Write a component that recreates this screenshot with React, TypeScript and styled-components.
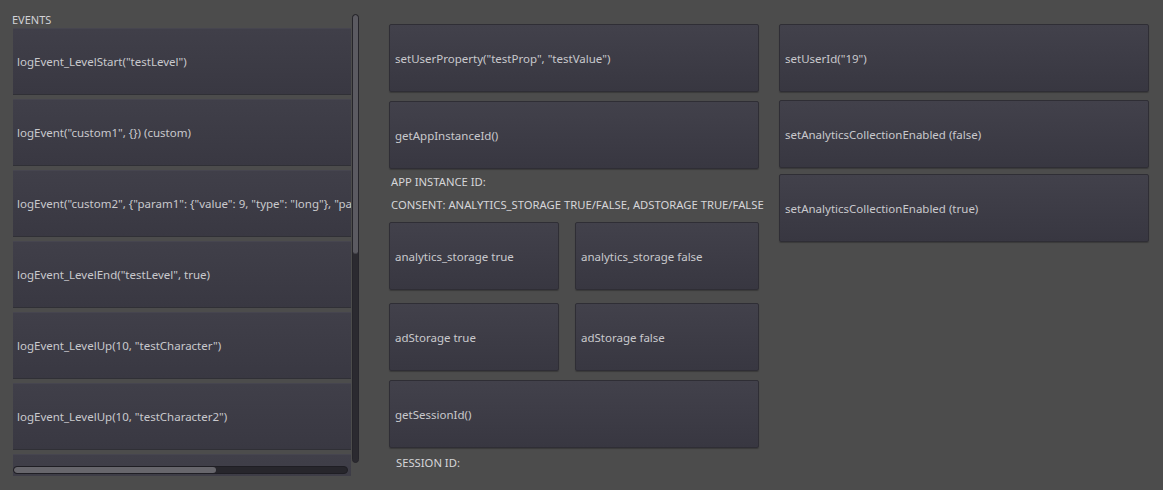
import styled, { createGlobalStyle } from "styled-components";

const GlobalStyle = createGlobalStyle`
  html, body {
    margin: 0;
    padding: 0;
    background: #4c4c4c;
  }
  body {
    font-family: "Noto Sans", "DejaVu Sans", sans-serif;
    font-size: 11.5px;
    color: #c9c9cc;
  }
`;

const events = [
  'logEvent_LevelStart("testLevel")',
  'logEvent("custom1", {}) (custom)',
  'logEvent("custom2", {"param1": {"value": 9, "type": "long"}, "param2": {"value": "abc", "type": "string"}})',
  'logEvent_LevelEnd("testLevel", true)',
  'logEvent_LevelUp(10, "testCharacter")',
  'logEvent_LevelUp(10, "testCharacter2")',
  'logEvent_Share("testMethod", "testContent")',
];

const App = () => {
  return (
    <>
      <GlobalStyle />
      <Screen>
        <EventsPanel>
          <EventsViewport>
            <SectionLabel>EVENTS</SectionLabel>
            <EventList>
              {events.map((e) => (
                <EventButton key={e}>{e}</EventButton>
              ))}
            </EventList>
          </EventsViewport>
          <VScroll>
            <VGrabber />
          </VScroll>
          <HScroll>
            <HGrabber />
          </HScroll>
        </EventsPanel>

        <MiddleColumn>
          <WideButton>setUserProperty("testProp", "testValue")</WideButton>
          <WideButton $top={9}>getAppInstanceId()</WideButton>
          <InfoLabel $top={7}>APP INSTANCE ID:</InfoLabel>
          <InfoLabel $top={11}>CONSENT: ANALYTICS_STORAGE TRUE/FALSE, ADSTORAGE TRUE/FALSE</InfoLabel>
          <ConsentGrid>
            <WideButton>analytics_storage true</WideButton>
            <WideButton>analytics_storage false</WideButton>
            <WideButton>adStorage true</WideButton>
            <WideButton>adStorage false</WideButton>
          </ConsentGrid>
          <WideButton $top={9}>getSessionId()</WideButton>
          <InfoLabel $top={9} $indent={7}>SESSION ID:</InfoLabel>
        </MiddleColumn>

        <RightColumn>
          <WideButton>setUserId("19")</WideButton>
          <WideButton $top={8}>setAnalyticsCollectionEnabled (false)</WideButton>
          <WideButton $top={6}>setAnalyticsCollectionEnabled (true)</WideButton>
        </RightColumn>
      </Screen>
    </>
  );
};

const Screen = styled.div`
  width: 1163px;
  height: 490px;
  display: flex;
  align-items: flex-start;
  box-sizing: border-box;
  padding: 14px 0 0 12px;
  overflow: hidden;
`;

const EventsPanel = styled.div`
  display: grid;
  grid-template-columns: 339px 8px;
  grid-template-rows: 449px 13px;
  position: relative;
  width: 348px;
  height: 462px;
`;

const EventsViewport = styled.div`
  grid-column: 1;
  grid-row: 1 / span 2;
  overflow: hidden;
  display: flex;
  flex-direction: column;
`;

const SectionLabel = styled.div`
  flex: none;
  height: 14px;
  line-height: 11px;
  color: #d2d2d6;
  font-size: 11px;
`;

const EventList = styled.div`
  display: flex;
  flex-direction: column;
  gap: 4px;
  padding-left: 1px;
`;

const EventButton = styled.div`
  flex: none;
  height: 67px;
  box-sizing: border-box;
  display: flex;
  align-items: center;
  padding-left: 4px;
  white-space: nowrap;
  overflow: hidden;
  background: linear-gradient(180deg, #403f49 0%, #393842 100%);
  border-top: 1px solid #46454f;
  border-bottom: 1px solid #303036;
  color: #c9c9cd;
`;

const VScroll = styled.div`
  grid-column: 2;
  grid-row: 1;
  position: relative;
  left: 1px;
  width: 7px;
  height: 449px;
  box-sizing: border-box;
  border-radius: 4px;
  background: #2b2a30;
  border: 1px solid #26252b;
  overflow: hidden;
`;

const VGrabber = styled.div`
  height: 238px;
  border-radius: 3px;
  background: #5b5a61;
  border-bottom: 1px solid #45444b;
`;

const HScroll = styled.div`
  position: absolute;
  left: 1px;
  top: 452px;
  width: 335px;
  height: 8px;
  box-sizing: border-box;
  border-radius: 4px;
  background: #27262c;
  border: 1px solid #1f1e24;
  overflow: hidden;
`;

const HGrabber = styled.div`
  width: 202px;
  height: 100%;
  border-radius: 3px;
  background: #67666c;
`;

const MiddleColumn = styled.div`
  margin-left: 29px;
  margin-top: 10px;
  width: 370px;
  display: flex;
  flex-direction: column;
`;

const RightColumn = styled.div`
  margin-left: 20px;
  margin-top: 10px;
  width: 370px;
  display: flex;
  flex-direction: column;
`;

const WideButton = styled.div<{ $top?: number }>`
  margin-top: ${(p) => p.$top ?? 0}px;
  height: 68px;
  box-sizing: border-box;
  display: flex;
  align-items: center;
  padding-left: 5px;
  white-space: nowrap;
  overflow: hidden;
  background: linear-gradient(180deg, #42414b 0%, #383741 100%);
  border: 1px solid #2f2e35;
  border-radius: 2px;
  box-shadow: 0 1px 1px rgba(0, 0, 0, 0.25);
  color: #c9c9cd;
`;

const InfoLabel = styled.div<{ $top?: number; $indent?: number }>`
  margin-top: ${(p) => p.$top ?? 0}px;
  padding-left: ${(p) => p.$indent ?? 2}px;
  height: 12px;
  line-height: 12px;
  white-space: nowrap;
  color: #d6d6d9;
  font-size: 11.25px;
`;

const ConsentGrid = styled.div`
  margin-top: 11px;
  display: grid;
  grid-template-columns: 170px 184px;
  column-gap: 16px;
  row-gap: 13px;
`;

export default App;
